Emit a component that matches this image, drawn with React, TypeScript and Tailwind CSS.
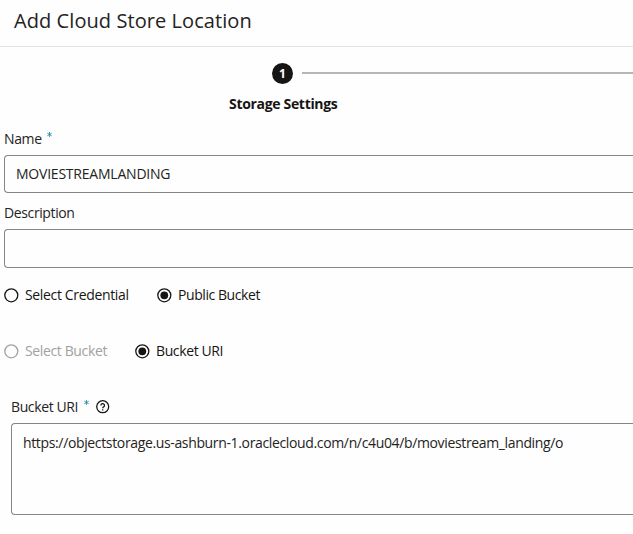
import React from "react";

function Radio({ checked = false, disabled = false, label, className }: { checked?: boolean; disabled?: boolean; label: string; className: string }) {
  return (
    <label className={`flex h-5 items-center gap-[6px] ${disabled ? "text-[#a2a1a0]" : "text-[#161513]"}`}>
      <svg width="15" height="15" viewBox="0 0 15 15" fill="none" className="shrink-0">
        <circle cx="7.3" cy="7.3" r="6.5" stroke="currentColor" strokeWidth="1.3" />
        {checked && <circle cx="7.3" cy="7.3" r="3.9" fill="currentColor" />}
      </svg>
      <span className={`whitespace-nowrap ${className}`}>{label}</span>
    </label>
  );
}

function Required() {
  return (
    <svg width="5" height="5" viewBox="0 0 5 5" className="mt-[3px] shrink-0" stroke="#227e9e" strokeWidth="0.8">
      <path d="M2.5 0v5M0.3 1.2l4.4 2.6M4.7 1.2L0.3 3.8" />
    </svg>
  );
}

export default function App() {
  return (
    <div className="flex h-[534px] w-full flex-col overflow-hidden bg-[#fefefe] font-['Open_Sans','Noto_Sans',sans-serif] text-[14px] leading-5 text-[#242321]">
      <header className="flex h-[47px] shrink-0 items-center border-b border-[#e4e4e4] pb-[5px] pl-[14px]">
        <h1 className="whitespace-nowrap text-[20px] leading-7 tracking-[0.07px]">Add Cloud Store Location</h1>
      </header>

      <div className="flex h-[82px] shrink-0 flex-col pt-4">
        <div className="flex h-[21px] items-center pl-[272px]">
          <div className="flex size-[21px] shrink-0 items-center justify-center rounded-full bg-[#161513] text-[12px] font-bold text-white">1</div>
          <div className="mb-[1px] ml-[9px] h-[2px] flex-1 bg-[#b5b5b5]" />
        </div>
        <div className="mt-[10px] flex pl-[229px]">
          <span className="whitespace-nowrap text-[14px] font-bold tracking-[-0.32px] text-[#161513]">Storage Settings</span>
        </div>
      </div>

      <div className="flex flex-col pl-1">
        <div className="flex h-[26px] items-start">
          <label className="w-[43px] whitespace-nowrap tracking-[-0.38px]">Name</label>
          <Required />
        </div>
        <div className="flex h-[38px] items-center rounded-l-[4px] border border-r-0 border-[#858585] pl-[11px]">
          <span className="whitespace-nowrap tracking-[-0.22px]">MOVIESTREAMLANDING</span>
        </div>
        <div className="flex h-9 pt-[10px]">
          <label className="whitespace-nowrap tracking-[-0.38px]">Description</label>
        </div>
        <div className="h-[39px] rounded-l-[4px] border border-r-0 border-[#858585]" />
      </div>

      <div className="mt-[17px] flex gap-7 pl-1">
        <Radio label="Select Credential" className="w-[104px] tracking-[-0.35px]" />
        <Radio checked label="Public Bucket" className="tracking-[-0.43px]" />
      </div>
      <div className="mt-9 flex gap-7 pl-1">
        <Radio disabled label="Select Bucket" className="w-[82px] tracking-[-0.37px]" />
        <Radio checked label="Bucket URI" className="tracking-[-0.38px]" />
      </div>

      <div className="mt-9 flex flex-col pl-[11px]">
        <div className="flex h-[26px] items-start">
          <label className="w-[73px] whitespace-nowrap tracking-[-0.38px]">Bucket URI</label>
          <Required />
          <svg width="14" height="14" viewBox="0 0 14 14" fill="none" stroke="#161513" strokeWidth="1.25" className="ml-[7px] mt-[3px]">
            <circle cx="6.7" cy="6.7" r="6" />
            <path d="M4.9 5.4a1.8 1.8 0 1 1 2.7 1.5Q6.7 7.3 6.7 8.2M6.7 9.2v1.2" />
          </svg>
        </div>
        <div className="h-[92px] rounded-l-[4px] border border-r-0 border-[#858585] pl-[11px] pt-[9px]">
          <span className="whitespace-nowrap tracking-[-0.355px]">https://objectstorage.us-ashburn-1.oraclecloud.com/n/c4u04/b/moviestream_landing/o</span>
        </div>
      </div>
    </div>
  );
}
